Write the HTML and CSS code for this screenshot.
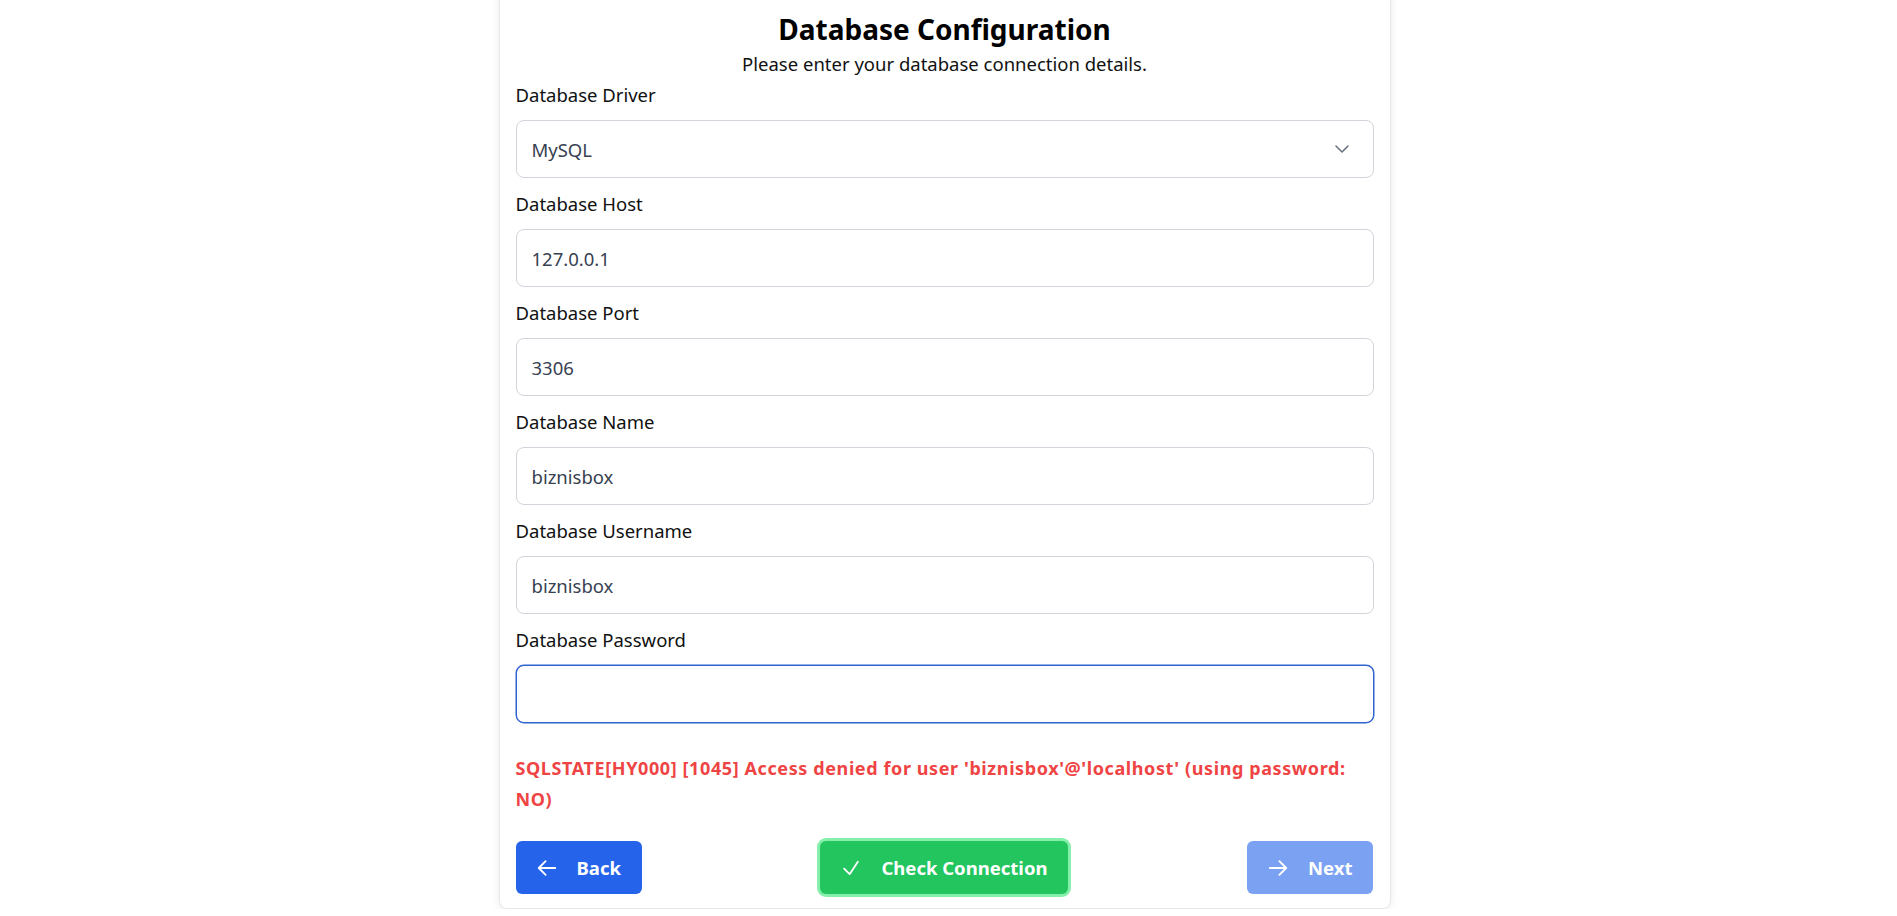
FILE: index.html
```html
<!DOCTYPE html>
<html lang="en">
<head>
  <meta charset="UTF-8" />
  <meta name="viewport" content="width=device-width, initial-scale=1.0"/>
  <title>Installer - Database</title>
  <link rel="stylesheet" href="styles.css">
</head>
<body>
  <div class="card">
    <div class="head">
      <h1>Database Configuration</h1>
      <p>Please enter your database connection details.</p>
    </div>

    <form class="fields" onsubmit="return false">
      <div class="field">
        <label for="driver">Database Driver</label>
        <div class="select-wrap">
          <select id="driver">
            <option>MySQL</option>
            <option>PostgreSQL</option>
            <option>SQLite</option>
          </select>
          <svg class="chevron" viewBox="0 0 24 24" width="24" height="24" fill="none" stroke="currentColor" stroke-width="1.6" stroke-linecap="round" stroke-linejoin="round">
            <path d="M6 9l6 6 6-6"/>
          </svg>
        </div>
      </div>

      <div class="field">
        <label for="host">Database Host</label>
        <input id="host" type="text" value="127.0.0.1">
      </div>

      <div class="field">
        <label for="port">Database Port</label>
        <input id="port" type="text" value="3306">
      </div>

      <div class="field">
        <label for="name">Database Name</label>
        <input id="name" type="text" value="biznisbox">
      </div>

      <div class="field">
        <label for="user">Database Username</label>
        <input id="user" type="text" value="biznisbox">
      </div>

      <div class="field">
        <label for="pass">Database Password</label>
        <input id="pass" class="focused" type="password" value="">
      </div>
    </form>

    <p class="error">SQLSTATE[HY000] [1045] Access denied for user 'biznisbox'@'localhost' (using password: NO)</p>

    <div class="actions">
      <button class="btn back">
        <svg viewBox="0 0 24 24" width="22" height="22" fill="none" stroke="currentColor" stroke-width="2" stroke-linecap="round" stroke-linejoin="round"><path d="M10.5 19.5L3 12l7.5-7.5M3 12h18"/></svg>
        Back
      </button>
      <button class="btn check">
        <svg viewBox="0 0 24 24" width="22" height="22" fill="none" stroke="currentColor" stroke-width="2" stroke-linecap="round" stroke-linejoin="round"><path d="M4.5 12.75l6 6 9-13.5"/></svg>
        Check Connection
      </button>
      <button class="btn next" disabled>
        <svg viewBox="0 0 24 24" width="22" height="22" fill="none" stroke="currentColor" stroke-width="2" stroke-linecap="round" stroke-linejoin="round"><path d="M13.5 4.5L21 12l-7.5 7.5M21 12H3"/></svg>
        Next
      </button>
    </div>
  </div>
</body>
</html>
```

FILE: styles.css
```css
* {
  margin: 0;
  padding: 0;
  box-sizing: border-box;
}

body {
  font-family: 'Segoe UI', 'Noto Sans', sans-serif;
  background: #ffffff;
  color: #111111;
  padding-right: 8px;
  overflow: hidden;
}

.card {
  width: 892px;
  margin: -20px auto 0;
  padding: 30px 16px 14px;
  background: #fff;
  border: 1px solid #e5e7eb;
  border-radius: 8px;
  box-shadow: 0 1px 8px rgba(0, 0, 0, 0.08);
}

.head {
  text-align: center;
}

.head h1 {
  font-size: 28px;
  line-height: 36px;
  font-weight: 700;
  color: #000;
}

.head p {
  font-size: 18.5px;
  line-height: 28px;
  margin: 3px 0;
}

.fields {
  display: flex;
  flex-direction: column;
  gap: 12px;
}

.field label {
  display: block;
  font-size: 18.5px;
  line-height: 28px;
  margin-bottom: 11px;
}

.field input,
.field select {
  width: 100%;
  height: 58px;
  padding: 0 15px;
  border: 1px solid #d1d5db;
  border-radius: 8px;
  background: #fff;
  font-family: inherit;
  font-size: 18.5px;
  color: #374151;
  outline: none;
}

.field select {
  appearance: none;
  -webkit-appearance: none;
}

.field input.focused {
  border-color: #2f62d1;
  box-shadow: 0 0 0 0.5px #2f62d1;
}

.select-wrap {
  position: relative;
}

.chevron {
  position: absolute;
  right: 20px;
  top: 17px;
  color: #6b7280;
  pointer-events: none;
}

.error {
  margin-top: 30px;
  font-size: 18px;
  line-height: 31px;
  font-weight: 700;
  letter-spacing: 0.6px;
  color: #ef4444;
}

.actions {
  display: flex;
  justify-content: space-between;
  align-items: center;
  margin-top: 26px;
}

.btn {
  display: flex;
  align-items: center;
  gap: 19px;
  height: 53px;
  padding: 0 21px 0 20px;
  border: none;
  border-radius: 6px;
  font-family: inherit;
  font-size: 18.5px;
  font-weight: 700;
  color: #fff;
  cursor: pointer;
}

.btn.back {
  background: #2563eb;
}

.btn.check {
  background: #22c55e;
  box-shadow: 0 0 0 3px #86efac;
}

.btn.next {
  background: #2563eb;
  opacity: 0.6;
  cursor: not-allowed;
}
```
